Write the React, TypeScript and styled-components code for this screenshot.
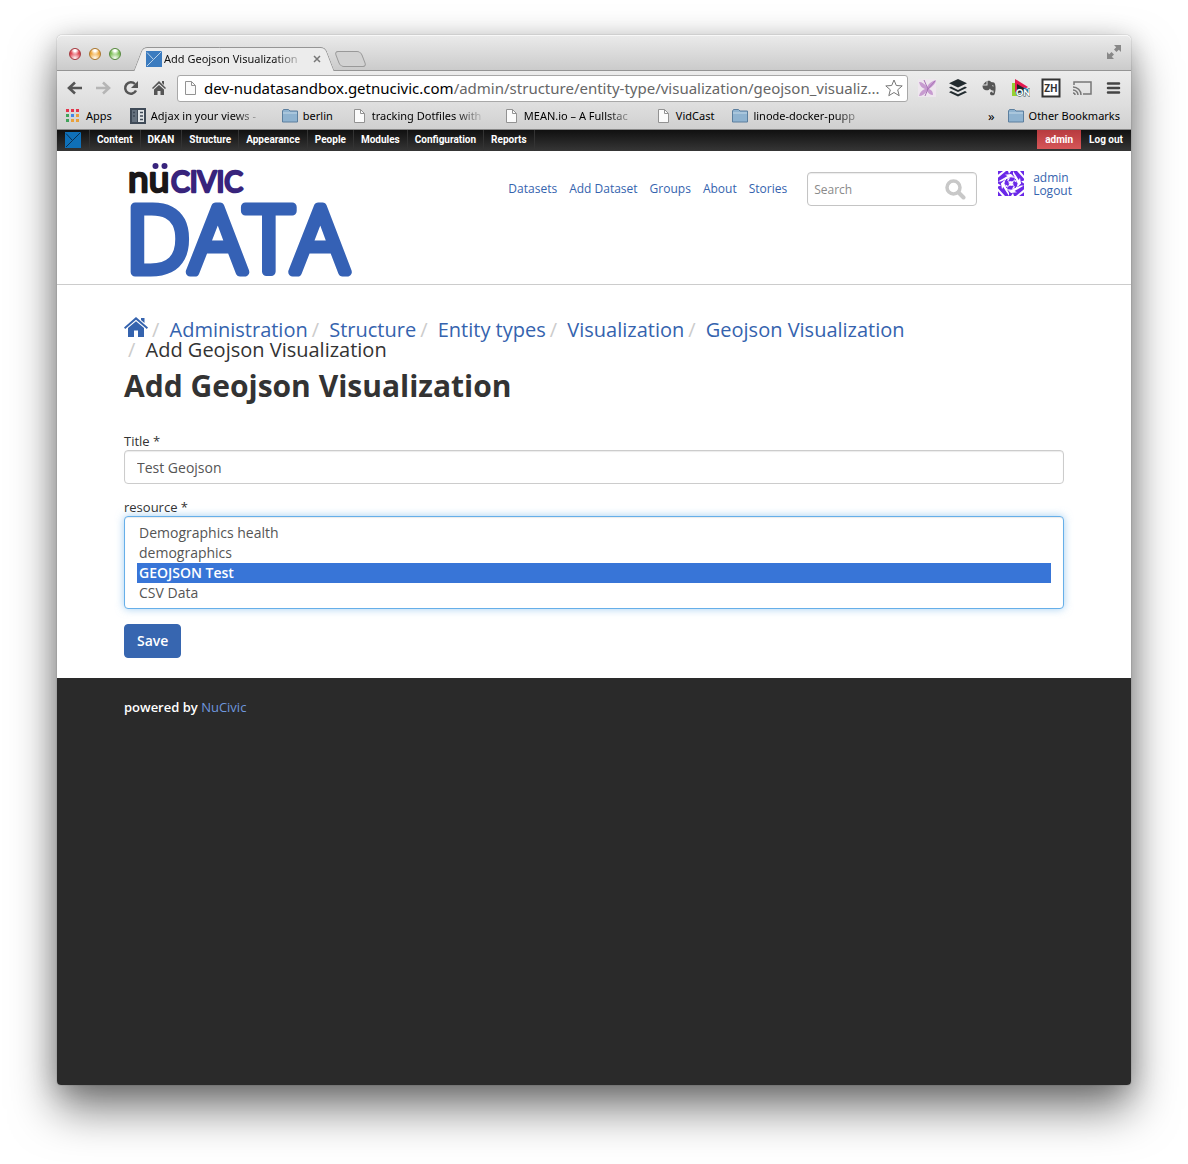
import React from "react";
import styled, { createGlobalStyle, css } from "styled-components";

const ui = `"Noto Sans", "Open Sans", sans-serif`;
const body = `"Open Sans", "Noto Sans", sans-serif`;
const blue = "#3563ae";

const Global = createGlobalStyle`
  *, *::before, *::after { box-sizing: border-box; }
  body { margin: 0; background: #fff; font-family: ${body}; color: #333; }
  a { text-decoration: none; }
  ul, ol { list-style: none; margin: 0; padding: 0; }
  button { font: inherit; border: 0; background: none; padding: 0; color: inherit; }
  svg { display: block; flex: none; }
`;

const Desktop = styled.div`
  display: flex;
  flex-direction: column;
  min-height: 100vh;
  padding: 35px 57px 79px;
  overflow: hidden;
`;

const Window = styled.div`
  flex: 1;
  display: flex;
  flex-direction: column;
  border-radius: 5px 5px 4px 4px;
  background: #fff;
  box-shadow: 0 0 1px rgba(0, 0, 0, 0.6), 0 24px 46px rgba(0, 0, 0, 0.52), 0 4px 26px rgba(0, 0, 0, 0.2);
`;

const TitleBar = styled.div`
  display: flex;
  align-items: flex-end;
  height: 36px;
  padding-left: 12px;
  border-radius: 5px 5px 0 0;
  border-bottom: 1px solid #959595;
  background: linear-gradient(#ebebeb, #cbcbcb);
  box-shadow: inset 0 1px 0 #f8f8f8;
  font-family: ${ui};
`;

const Lights = styled.div`
  display: flex;
  gap: 8px;
  align-self: center;
  padding-top: 2px;
`;

const Light = styled.button<{ $tone: string; $rim: string }>`
  width: 12px;
  height: 12px;
  border-radius: 50%;
  border: 1px solid ${(p) => p.$rim};
  background: radial-gradient(circle at 50% 15%, #fff 0 12%, transparent 45%),
    radial-gradient(circle at 50% 95%, #fff 0, ${(p) => p.$tone} 60%);
`;

const Tab = styled.div`
  position: relative;
  display: flex;
  align-items: center;
  width: 192px;
  height: 24px;
  margin: 0 0 -1px 17px;
  padding: 0 9px 0 8px;
  font-size: 11px;
  color: #111;
  &::before, &::after {
    content: "";
    position: absolute;
    top: 0;
    bottom: 0;
    width: 55%;
    border: 1px solid #959595;
    border-bottom: 0;
    background: #ececec;
  }
  &::before {
    left: 0;
    border-right: 0;
    border-top-left-radius: 5px;
    transform: skewX(-21deg);
  }
  &::after {
    right: 0;
    border-left: 0;
    border-top-right-radius: 5px;
    transform: skewX(21deg);
  }
  > * { position: relative; z-index: 1; }
`;

const fade = css`
  white-space: nowrap;
  mask-image: linear-gradient(to right, #000 calc(100% - 30px), transparent);
`;

const TabTitle = styled.span`
  flex: 1;
  margin: 0 8px 0 2px;
  line-height: 16px;
  ${fade}
`;

const NewTab = styled.button`
  width: 27px;
  height: 16px;
  margin: 0 0 3px 7px;
  border: 1px solid #999;
  border-radius: 4px;
  background: #d2d2d2;
  transform: skewX(21deg);
`;

const Expand = styled.button`
  margin: 0 9px 10px auto;
`;

const ToolBar = styled.div`
  display: flex;
  align-items: center;
  height: 34px;
  padding: 0 8px 0 10px;
  background: linear-gradient(#ececec, #dedede);
  font-family: ${ui};
`;

const NavButtons = styled.div`
  display: flex;
  gap: 12px;
`;

const Address = styled.label`
  flex: 1;
  display: flex;
  align-items: center;
  min-width: 0;
  height: 27px;
  margin-left: 10px;
  padding: 0 4px 0 4px;
  border: 1px solid #a8a8a8;
  border-radius: 3px;
  background: #fff;
`;

const Url = styled.a`
  flex: 1;
  min-width: 0;
  margin: 0 4px 0 6px;
  white-space: nowrap;
  font-size: 15px;
  line-height: 24px;
  color: #666;
  b { font-weight: 400; color: #000; }
`;

const Extensions = styled.div`
  display: flex;
  gap: 11px;
  margin-left: 9px;
`;

const Bookmarks = styled.div`
  display: flex;
  align-items: center;
  gap: 18px;
  height: 25px;
  padding: 0 11px 2px 8px;
  border-bottom: 1px solid #888;
  background: linear-gradient(#dedede, #d0d0d0);
  font-family: ${ui};
  font-size: 11px;
  color: #000;
`;

const Bookmark = styled.a<{ $cut?: boolean; $end?: boolean }>`
  display: flex;
  align-items: center;
  gap: 5px;
  margin-left: ${(p) => (p.$end ? "auto" : "0")};
  color: #000;
  line-height: 16px;
  span {
    white-space: nowrap;
    ${(p) => p.$cut && css`width: 113px; ${fade}`}
  }
`;

const More = styled.span`
  margin-right: -5px;
  font-size: 13px;
  line-height: 16px;
`;

const AdminBar = styled.nav`
  display: flex;
  height: 21px;
  background: linear-gradient(#101010, #363636);
  font-family: Roboto, ${ui};
  font-size: 10px;
  font-weight: 700;
  line-height: 20px;
`;

const AdminLink = styled.a<{ $user?: boolean; $plain?: boolean }>`
  display: block;
  padding: 0 7px;
  color: #fff;
  border-right: ${(p) => (p.$plain ? "0" : "1px solid #333")};
  ${(p) => p.$plain && css`padding: 0 8px;`}
  ${(p) => p.$user && css`height: 19px; margin-left: auto; padding: 0 8px; background: linear-gradient(#b73b3f, #d65658); border: 0;`}
`;

const AdminIcon = styled.a`
  padding: 2px 8px;
  border-right: 1px solid #333;
`;

const Header = styled.header`
  display: flex;
  align-items: flex-start;
  height: 134px;
  padding: 20px 59px 0 73px;
  border-bottom: 1px solid #ccc;
  background: #fff;
  font-size: 12px;
  a { color: ${blue}; }
`;

const Logo = styled.a`
  margin: -12px auto 0 -3px;
`;

const MainNav = styled.ul`
  display: flex;
  gap: 12px;
  margin-right: 20px;
  line-height: 36px;
`;

const Search = styled.form`
  display: flex;
  align-items: center;
  width: 170px;
  height: 34px;
  margin: 1px 21px 0 0;
  padding: 0 10px 0 6px;
  border: 1px solid #c4c4c4;
  border-radius: 4px;
  box-shadow: inset 0 1px 1px rgba(0, 0, 0, 0.08);
  input {
    flex: 1;
    min-width: 0;
    padding: 0;
    border: 0;
    outline: 0;
    background: none;
    font: 12px ${body};
    color: #555;
  }
  input::placeholder { color: #8a8a8a; opacity: 1; }
`;

const User = styled.div`
  display: flex;
  gap: 9px;
  line-height: 13px;
  a { display: block; }
`;

const Content = styled.main`
  width: calc(100% - 134px);
  max-width: 940px;
  margin: 0 auto;
  padding: 35px 0 20px;
`;

const Crumbs = styled.ol`
  font-size: 20px;
  line-height: 20px;
  li { display: inline-block; vertical-align: top; }
  li + li::before { content: "/\\00a0"; padding: 0 5px 0 4px; color: #ccc; }
  a { color: ${blue}; }
  svg { display: inline-block; vertical-align: top; margin-top: -3px; }
`;

const Title = styled.h1`
  margin: 6px 0 26px;
  font-size: 30px;
  line-height: 40px;
  font-weight: 700;
  color: #333;
`;

const Field = styled.div`
  margin-bottom: 15px;
  & + & { margin-top: -1px; }
  label {
    display: block;
    font-size: 13px;
    line-height: 18px;
  }
`;

const control = css`
  display: block;
  width: 100%;
  padding: 6px 12px;
  border: 1px solid #ccc;
  border-radius: 4px;
  background: #fff;
  font: 14px/20px ${body};
  color: #555;
`;

const TextBox = styled.input`
  ${control}
  height: 34px;
  box-shadow: inset 0 1px 1px rgba(0, 0, 0, 0.08);
`;

const ListBox = styled.select`
  ${control}
  height: 93px;
  overflow: hidden;
  border-color: #66afe9;
  outline: 0;
  box-shadow: inset 0 1px 1px rgba(0, 0, 0, 0.08), 0 0 8px rgba(102, 175, 233, 0.6);
  option {
    height: 20px;
    min-height: 20px;
    padding: 0 2px;
    line-height: 20px;
  }
  option:checked {
    background: #3875d7 linear-gradient(#3875d7, #3875d7);
    -webkit-text-fill-color: #fff;
    font-weight: 600;
  }
`;

const Save = styled.button`
  display: block;
  height: 34px;
  padding: 0 12px;
  border: 1px solid #3766b0;
  border-radius: 4px;
  background: #3766b0;
  color: #fff;
  font-size: 14px;
  font-weight: 600;
  line-height: 20px;
`;

const Footer = styled.footer`
  flex: 1;
  padding: 20px 67px;
  border-radius: 0 0 4px 4px;
  background: #2a2a2a;
  color: #fff;
  font-size: 13px;
  font-weight: 600;
  line-height: 18px;
  a { color: #6f97dd; font-weight: 400; }
`;

const Envelope = ({ size = 16, color = "#3b7bbf", line = "#b9d2ea" }) => (
  <svg width={size} height={size} viewBox="0 0 16 16">
    <rect width="16" height="16" fill={color} />
    <path d="M1 1.500L7.500 8.500L15.500 0.500M7.500 8.500L1 15" fill="none" stroke={line} strokeWidth="1" />
  </svg>
);

const Folder = () => (
  <svg width="16" height="16" viewBox="0 0 16 16">
    <path d="M.5 14V3l1-1.500h5L8 3h7.500v11z" fill="#8fb3d0" stroke="#5c7f9e" />
    <path d="M1 5h14" stroke="#c4d9e8" />
  </svg>
);

const Page = () => (
  <svg width="16" height="16" viewBox="0 0 16 16">
    <path d="M3.500 1.500h6l4 4v9h-10z" fill="#fbfbfb" stroke="#929292" />
    <path d="M9.500 1.500v4h4" fill="none" stroke="#929292" />
  </svg>
);

const AppsIcon = () => {
  const c = ["#e3344c", "#e3344c", "#e3344c", "#41a35a", "#4286e8", "#e9a13b", "#41a35a", "#e9a13b", "#e9a13b"];
  return (
    <svg width="16" height="16" viewBox="0 0 16 16">
      {c.map((f, i) => (
        <rect key={i} x={1 + (i % 3) * 5} y={1 + Math.floor(i / 3) * 5} width="3" height="3" fill={f} />
      ))}
    </svg>
  );
};

const ViewsIcon = () => (
  <svg width="16" height="16" viewBox="0 0 16 16">
    <rect width="16" height="16" fill="#3f4a57" />
    <path d="M2 2h5v12H2z" fill="#65717e" />
    <path d="M8 2h6v12H8z" fill="#dfe3e6" />
    <path d="M10 4.500h3M10 8h3M10 11.500h3M3 4.500h2M3 8h2" stroke="#3f4a57" strokeWidth="1.500" />
  </svg>
);

const LogoMark = () => (
  <svg width="228" height="120" viewBox="0 0 228 120" overflow="visible" fontFamily="Lato, sans-serif" strokeLinejoin="round" style={{ fontKerning: "none" }}>
    <g strokeWidth="2.500">
      <text x="1" y="33" fontSize="37" fill="#1a1718" stroke="#1a1718">nu</text>
      <text x="44" y="33" fontSize="28" fill="#38247c" stroke="#38247c">CIVIC</text>
    </g>
    <circle cx="28.500" cy="7" r="3" fill="#38247c" />
    <circle cx="37.500" cy="7" r="3" fill="#38247c" />
    <text x="-1" y="113" fontFamily="Open Sans, sans-serif" fontSize="91" fontWeight="300" fill="#3561b5" stroke="#3561b5" strokeWidth="9" style={{ fontKerning: "normal" }}>DATA</text>
  </svg>
);

const Avatar = () => (
  <svg width="26" height="25" viewBox="0 0 26 26" preserveAspectRatio="none">
    <rect width="26" height="26" fill="#6a28e8" />
    {[0, 90, 180, 270].map((r) => (
      <g key={r} transform={`rotate(${r} 13 13)`} fill="#fff">
        <path d="M0 4L5 0H8L0 7zM0 11L13 3V6L3 11zM10 0H13L11 3zM3 13L6 10V15L4 19z" />
        <path d="M9 7.500H12L10.500 10zM10.500 11.500L13 10.500V13H11z" />
      </g>
    ))}
    <circle cx="13" cy="13" r="7" fill="none" stroke="#fff" strokeWidth="1" />
    <path d="M9 9L17 17M17 9L9 17" stroke="#fff" strokeWidth="1" />
  </svg>
);

const Back = ({ color = "#555", flip = false }) => (
  <svg width="16" height="16" viewBox="0 0 16 16">
    <path d="M15 8H3M8 2.500L2 8L8 13.500" fill="none" stroke={color} strokeWidth="2.600" transform={flip ? "matrix(-1 0 0 1 16 0)" : undefined} />
  </svg>
);

const adminLinks = ["Content", "DKAN", "Structure", "Appearance", "People", "Modules", "Configuration", "Reports"];
const navLinks = ["Datasets", "Add Dataset", "Groups", "About", "Stories"];
const crumbs = ["Administration", "Structure", "Entity types", "Visualization", "Geojson Visualization"];
const resources = ["Demographics health", "demographics", "GEOJSON Test", "CSV Data"];

export default function App() {
  return (
    <>
      <Global />
      <Desktop>
        <Window>
          <TitleBar>
            <Lights>
              <Light aria-label="Close window" $tone="#e0434f" $rim="#a33a40" />
              <Light aria-label="Minimize" $tone="#f0a83c" $rim="#a9762f" />
              <Light aria-label="Zoom" $tone="#7cbf55" $rim="#56883f" />
            </Lights>
            <Tab>
              <Envelope />
              <TabTitle>Add Geojson Visualization</TabTitle>
              <button aria-label="Close tab">
                <svg width="8" height="8" viewBox="0 0 8 8"><path d="M1 1L7 7M7 1L1 7" stroke="#777" strokeWidth="1.500" /></svg>
              </button>
            </Tab>
            <NewTab aria-label="New tab" />
            <Expand aria-label="Full screen">
              <svg width="16" height="16" viewBox="0 0 16 16" fill="#888">
                <path d="M8 1H15V8L12.800 5.800L10.500 8L8 5.500L10.200 3.200zM1 8L3.200 10.200L5.500 8L8 10.500L5.800 12.800L8 15H1z" />
              </svg>
            </Expand>
          </TitleBar>
          <ToolBar>
            <NavButtons>
              <button aria-label="Back"><Back /></button>
              <button aria-label="Forward"><Back color="#b5b5b5" flip /></button>
              <button aria-label="Reload">
                <svg width="16" height="16" viewBox="0 0 16 16">
                  <path d="M13 10.500A5.700 5.700 0 1 1 12 4" fill="none" stroke="#555" strokeWidth="2.500" />
                  <path d="M15 1V8H8z" fill="#555" />
                </svg>
              </button>
              <button aria-label="Home">
                <svg width="16" height="16" viewBox="0 0 16 16" fill="#555">
                  <path d="M8 1L15 8L14 9L8 3.500L2 9L1 8zM11 1H13V5L11 3zM3 9.500L8 5L13 9.500V15H9.500V11H6.500V15H3z" />
                </svg>
              </button>
            </NavButtons>
            <Address>
              <Page />
              <Url href="#"><b>dev-nudatasandbox.getnucivic.com</b>/admin/structure/entity-type/visualization/geojson_visualiz...</Url>
              <button aria-label="Bookmark this page">
                <svg width="18" height="18" viewBox="0 0 18 18">
                  <path d="M9 1L11.300 6.500L17.200 6.900L12.700 10.800L14.200 16.700L9 13.500L3.800 16.700L5.300 10.800L.8 6.900L6.700 6.500z" fill="#fff" stroke="#777" />
                </svg>
              </button>
            </Address>
            <Extensions>
              <button aria-label="Butterfly">
                <svg width="20" height="20" viewBox="0 0 20 20">
                  <rect x="1" y="1" width="18" height="18" fill="#eee6ee" />
                  <path d="M2 4C5 4 8 6 10 9C12 5 15 3 19 2C19 5 16 8 12 11C15 12 16 14 16 17C13 17 11 15 10 13C8 16 5 18 2 18C3 14 5 12 8 11C5 10 3 8 2 4z" fill="#c79bd0" />
                  <path d="M7 2L11 11L8 18M18 3L10 12" stroke="#a873b6" fill="none" />
                </svg>
              </button>
              <button aria-label="Buffer">
                <svg width="20" height="20" viewBox="0 0 20 20" fill="#222b2f">
                  <path d="M10 1L19 5.200L10 9.500L1 5.200zM3 8.500L10 12L17 8.500L19 9.700L10 14L1 9.700zM3 13L10 16.300L17 13L19 14.200L10 18.500L1 14.200z" />
                </svg>
              </button>
              <button aria-label="Evernote">
                <svg width="20" height="20" viewBox="0 0 20 20" fill="#555">
                  <path d="M7.500 3V6.500H4zM8.500 3C10 2.500 11.500 3 12 4L15 4.500C17 6 17 13 15.500 16.500C14 18 11 17.500 11 15.500C11 14 12 13.500 13.500 13.700V15H14.500V12.500C12.500 12.500 11.500 12 11 10.500C10 12.500 8 12.500 6 12C4 11.500 3.500 9.500 3.500 7.500H8.500zM13 8L14.800 8.500C14.500 7 13.300 6.800 13 8z" fillRule="evenodd" />
                </svg>
              </button>
              <button aria-label="Play on">
                <svg width="20" height="20" viewBox="0 0 20 20">
                  <path d="M2 5h5v13H2z" fill="#95d032" />
                  <path d="M5 1L18 9L11 13L5 14z" fill="#e4184f" />
                  <path d="M7 6L14 10L17 14L7 15z" fill="#222" />
                  <path d="M14 9L19 12L15 16z" fill="#2098d8" />
                  <text x="6" y="18" fontFamily="Lato, sans-serif" fontWeight="900" fontSize="9" fill="#fff" stroke="#174a55" strokeWidth="1" paintOrder="stroke">ON</text>
                </svg>
              </button>
              <button aria-label="ZenHub">
                <svg width="20" height="20" viewBox="0 0 20 20">
                  <rect x="1.500" y="1.500" width="17" height="17" fill="#fff" stroke="#333" strokeWidth="2" />
                  <text x="10" y="14" textAnchor="middle" fontFamily="Open Sans, sans-serif" fontWeight="700" fontSize="10" fill="#333">ZH</text>
                </svg>
              </button>
              <button aria-label="Cast">
                <svg width="20" height="20" viewBox="0 0 20 20" fill="none" stroke="#777" strokeWidth="1.500">
                  <path d="M2 7V4H19V16H11M1 9A8 8 0 0 1 9 17M1 12A5 5 0 0 1 6 17M1 15A2 2 0 0 1 3 17" />
                </svg>
              </button>
              <button aria-label="Menu">
                <svg width="20" height="20" viewBox="0 0 20 20">
                  <path d="M5 5.500H16M5 10H16M5 14.500H16" stroke="#444" strokeWidth="2.500" strokeLinecap="round" />
                </svg>
              </button>
            </Extensions>
          </ToolBar>
          <Bookmarks>
            <Bookmark href="#"><AppsIcon /><span>Apps</span></Bookmark>
            <Bookmark href="#" $cut><ViewsIcon /><span>Adjax in your views -</span></Bookmark>
            <Bookmark href="#"><Folder /><span>berlin</span></Bookmark>
            <Bookmark href="#" $cut><Page /><span>tracking Dotfiles with</span></Bookmark>
            <Bookmark href="#" $cut><Page /><span>MEAN.io – A Fullstac</span></Bookmark>
            <Bookmark href="#"><Page /><span>VidCast</span></Bookmark>
            <Bookmark href="#" $cut><Folder /><span>linode-docker-pupp</span></Bookmark>
            <Bookmark href="#" $end aria-label="More bookmarks"><More>»</More></Bookmark>
            <Bookmark href="#"><Folder /><span>Other Bookmarks</span></Bookmark>
          </Bookmarks>
          <AdminBar>
            <AdminIcon href="#" aria-label="Home"><Envelope color="#0f70b8" line="#0b2f50" /></AdminIcon>
            {adminLinks.map((t) => <AdminLink key={t} href="#">{t}</AdminLink>)}
            <AdminLink href="#" $user>admin</AdminLink>
            <AdminLink href="#" $plain>Log out</AdminLink>
          </AdminBar>
          <Header>
            <Logo href="#" aria-label="NuCivic Data"><LogoMark /></Logo>
            <MainNav>
              {navLinks.map((t) => <li key={t}><a href="#">{t}</a></li>)}
            </MainNav>
            <Search>
              <input type="text" aria-label="Search" placeholder="Search" />
              <button type="button" aria-label="Submit search">
                <svg width="21" height="21" viewBox="0 0 21 21" fill="none" stroke="#c8c8c8">
                  <circle cx="8.500" cy="8.500" r="6.500" strokeWidth="3.500" />
                  <path d="M13.500 13.500L18.500 18.500" strokeWidth="4" strokeLinecap="round" />
                </svg>
              </button>
            </Search>
            <User>
              <Avatar />
              <div>
                <a href="#">admin</a>
                <a href="#">Logout</a>
              </div>
            </User>
          </Header>
          <Content>
            <Crumbs>
              <li>
                <a href="#" aria-label="Home">
                  <svg width="24" height="20" viewBox="0 0 24 20" fill={blue}>
                    <path d="M12 0L24 10.500L22.800 12L12 2.700L1.200 12L0 10.500zM17 1H20.500V6L17 3zM4 11L12 4.200L20 11V20H14V13.500H10V20H4z" />
                  </svg>
                </a>
              </li>
              {crumbs.map((t) => <li key={t}><a href="#">{t}</a></li>)}
              <li>Add Geojson Visualization</li>
            </Crumbs>
            <Title>Add Geojson Visualization</Title>
            <form>
              <Field>
                <label htmlFor="title">Title *</label>
                <TextBox id="title" type="text" defaultValue="Test Geojson" />
              </Field>
              <Field>
                <label htmlFor="resource">resource *</label>
                <ListBox id="resource" size={4} defaultValue="GEOJSON Test">
                  {resources.map((t) => <option key={t}>{t}</option>)}
                </ListBox>
              </Field>
              <Save type="button">Save</Save>
            </form>
          </Content>
          <Footer>powered by <a href="#">NuCivic</a></Footer>
        </Window>
      </Desktop>
    </>
  );
}
